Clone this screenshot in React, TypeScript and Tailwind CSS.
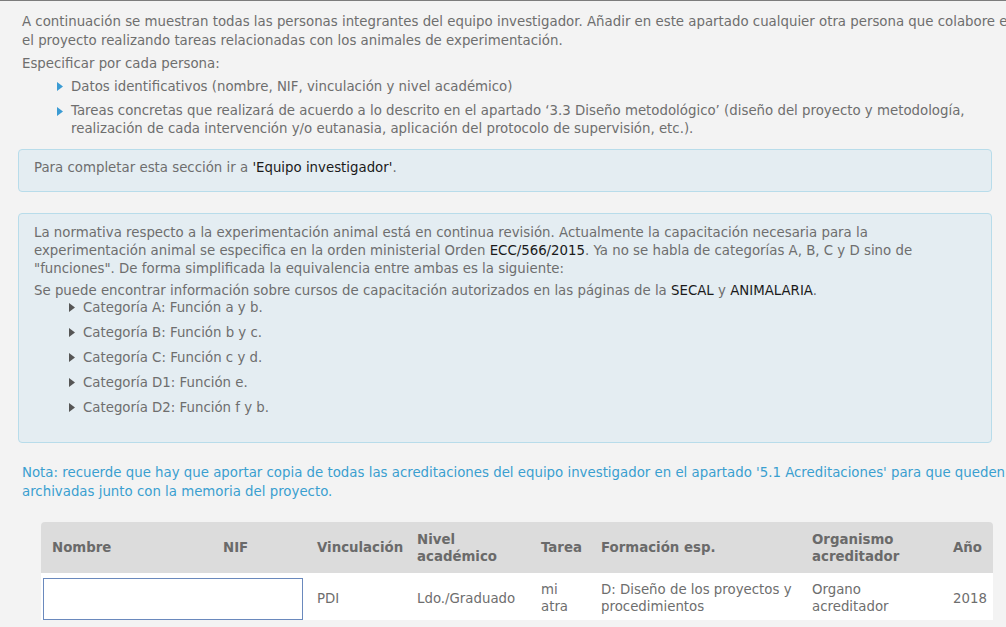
import React from "react";

const font = { fontFamily: '"DejaVu Sans", Verdana, sans-serif' };

function Flecha({ color }: { color: string }) {
  return (
    <svg width="6" height="9" viewBox="0 0 6 9" className="shrink-0">
      <path d="M0 0 L6 4.5 L0 9 Z" fill={color} />
    </svg>
  );
}

const categorias = [
  "Categoría A: Función a y b.",
  "Categoría B: Función b y c.",
  "Categoría C: Función c y d.",
  "Categoría D1: Función e.",
  "Categoría D2: Función f y b.",
];

const columnas = [
  ["Nombre"],
  ["NIF"],
  ["Vinculación"],
  ["Nivel", "académico"],
  ["Tarea"],
  ["Formación esp."],
  ["Organismo", "acreditador"],
  ["Año"],
];

export default function App() {
  return (
    <div
      className="w-[1006px] h-[627px] overflow-hidden bg-[#f3f3f3] border-t border-[#7c7c7c] text-[13.33px] text-[#6e6e6e]"
      style={font}
    >
      <div className="w-[1100px] pl-[22px] pt-[11px]">
        <p className="leading-[19px] whitespace-nowrap">
          A continuación se muestran todas las personas integrantes del equipo investigador. Añadir en este apartado cualquier otra persona que colabore en
          <br />
          el proyecto realizando tareas relacionadas con los animales de experimentación.
        </p>
        <p className="mt-[4px] leading-[19px]">Especificar por cada persona:</p>
        <ul className="pl-[35px] mt-[4px] whitespace-nowrap">
          <li className="flex items-start gap-[8px] leading-[19px]">
            <span className="pt-[5px]">
              <Flecha color="#3b9bd3" />
            </span>
            <span>Datos identificativos (nombre, NIF, vinculación y nivel académico)</span>
          </li>
          <li className="flex items-start gap-[8px] leading-[18px] mt-[6px]">
            <span className="pt-[5px]">
              <Flecha color="#3b9bd3" />
            </span>
            <span>
              Tareas concretas que realizará de acuerdo a lo descrito en el apartado ‘3.3 Diseño metodológico’ (diseño del proyecto y metodología,
              <br />
              realización de cada intervención y/o eutanasia, aplicación del protocolo de supervisión, etc.).
            </span>
          </li>
        </ul>
      </div>

      <div className="px-[18px]">
        <div className="w-[974px] mt-[11px] rounded-[4px] border border-[#b8dcea] bg-[#e4edf2] pl-[15px] pt-[8px] pb-[14px] leading-[19px]">
          Para completar esta sección ir a <span className="text-[#1a1a1a]">'Equipo investigador'</span>.
        </div>

        <div className="w-[974px] mt-[21px] rounded-[4px] border border-[#b8dcea] bg-[#e4edf2] pl-[15px] pt-[10px] pb-[17px] whitespace-nowrap">
          <p className="leading-[18px]">
            La normativa respecto a la experimentación animal está en continua revisión. Actualmente la capacitación necesaria para la
            <br />
            experimentación animal se especifica en la orden ministerial Orden <span className="text-[#1a1a1a]">ECC/566/2015</span>. Ya no se habla de categorías A, B, C y D sino de
            <br />
            "funciones". De forma simplificada la equivalencia entre ambas es la siguiente:
          </p>
          <p className="leading-[18px] mt-[4px]">
            Se puede encontrar información sobre cursos de capacitación autorizados en las páginas de la{" "}
            <span className="text-[#1a1a1a]">SECAL</span> y <span className="text-[#1a1a1a]">ANIMALARIA</span>.
          </p>
          <ul className="pl-[35px] mt-[-1px]">
            {categorias.map((c) => (
              <li key={c} className="flex items-start gap-[8px] leading-[18px] mb-[7px] last:mb-[8px] [&:nth-child(5)]:mt-[1px]">
                <span className="pt-[4px]">
                  <Flecha color="#555555" />
                </span>
                <span>{c}</span>
              </li>
            ))}
          </ul>
        </div>
      </div>

      <p className="pl-[22px] mt-[20px] leading-[19px] whitespace-nowrap text-[#3a9fd0]">
        Nota: recuerde que hay que aportar copia de todas las acreditaciones del equipo investigador en el apartado '5.1 Acreditaciones' para que queden
        <br />
        archivadas junto con la memoria del proyecto.
      </p>

      <div className="ml-[41px] mt-[21px] w-[952px]">
        <div className="grid grid-cols-[171px_94px_100px_124px_60px_211px_141px_51px] bg-[#dcdcdc] rounded-t-[4px] h-[51px] font-bold text-[#6a6a6a]">
          {columnas.map((c) => (
            <div key={c[0]} className="pl-[11px] flex flex-col justify-center leading-[17px]">
              {c.map((l) => (
                <span key={l}>{l}</span>
              ))}
            </div>
          ))}
        </div>
        <div className="grid grid-cols-[171px_94px_100px_124px_60px_211px_141px_51px] bg-white h-[47px] leading-[17px]">
          <div className="col-span-2 pl-[2px] pr-[3px] pt-[5px]">
            <input
              type="text"
              className="w-full h-[42px] bg-white border border-[#6a89bd] outline-none"
            />
          </div>
          <div className="pl-[11px] flex items-center pt-[3px]">PDI</div>
          <div className="pl-[11px] flex items-center pt-[3px]">Ldo./Graduado</div>
          <div className="pl-[11px] flex flex-col justify-center pt-[3px]">
            <span>mi</span>
            <span>atra</span>
          </div>
          <div className="pl-[11px] flex flex-col justify-center pt-[3px]">
            <span>D: Diseño de los proyectos y</span>
            <span>procedimientos</span>
          </div>
          <div className="pl-[11px] flex flex-col justify-center pt-[3px]">
            <span>Organo</span>
            <span>acreditador</span>
          </div>
          <div className="pl-[11px] flex items-center pt-[3px]">2018</div>
        </div>
      </div>
    </div>
  );
}
